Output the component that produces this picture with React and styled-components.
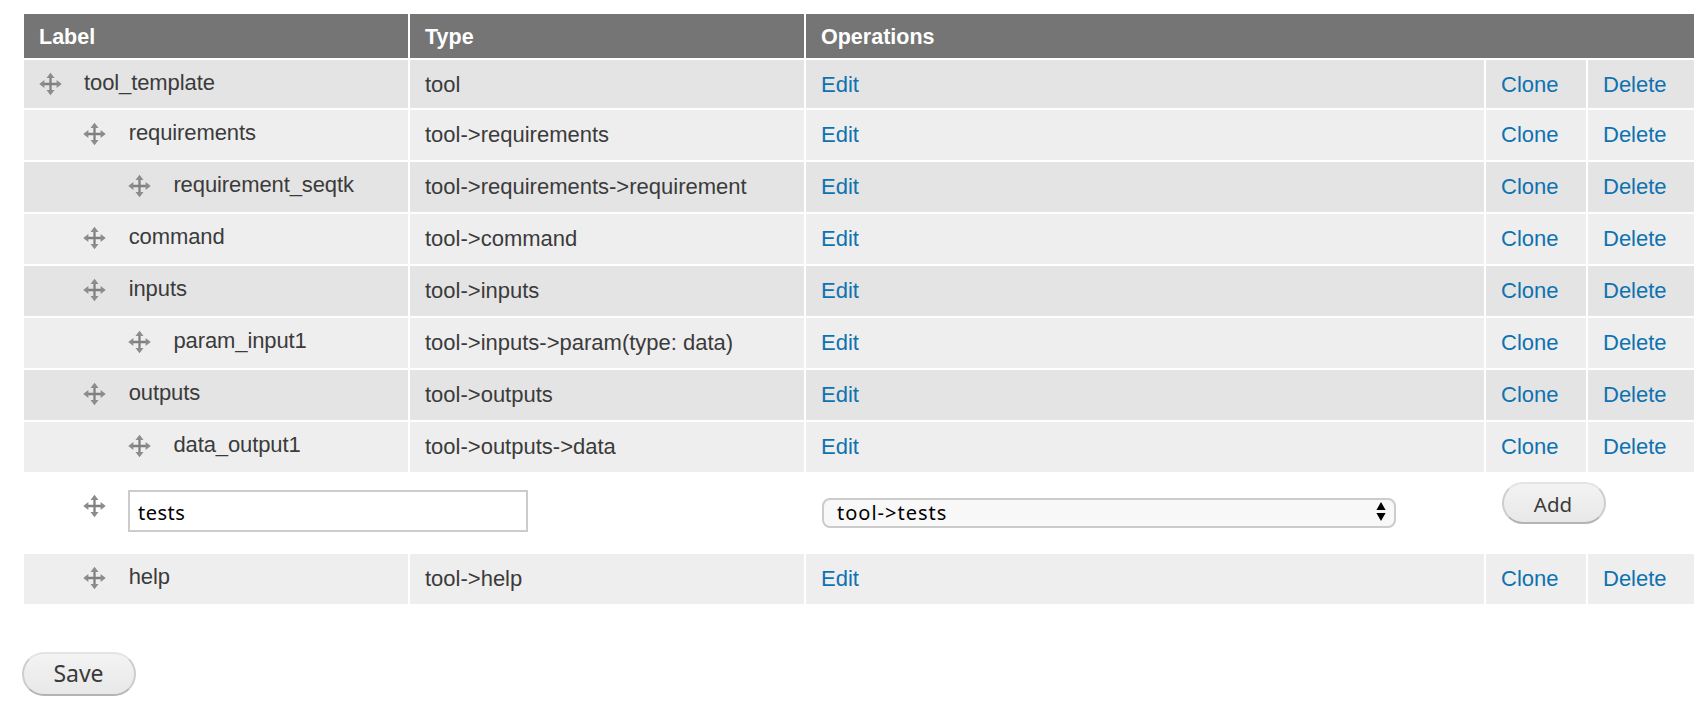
import React from 'react'
import styled, { createGlobalStyle } from 'styled-components'

const colors = {
  header: '#757575',
  odd: '#e4e4e4',
  even: '#eeeeee',
  text: '#3b3b3b',
  link: '#0f72b0',
  border: '#cccccc'
}

const rows = [
  { label: 'tool_template', type: 'tool', depth: 0, odd: true, first: true },
  { label: 'requirements', type: 'tool->requirements', depth: 1 },
  { label: 'requirement_seqtk', type: 'tool->requirements->requirement', depth: 2, odd: true },
  { label: 'command', type: 'tool->command', depth: 1 },
  { label: 'inputs', type: 'tool->inputs', depth: 1, odd: true },
  { label: 'param_input1', type: 'tool->inputs->param(type: data)', depth: 2 },
  { label: 'outputs', type: 'tool->outputs', depth: 1, odd: true },
  { label: 'data_output1', type: 'tool->outputs->data', depth: 2 }
]

const DragHandle = () => (
  <HandleIcon viewBox="0 0 24 24">
    <path d="M12 3V21M3 12H21" stroke="#808080" strokeWidth="2.4" />
    <path
      d="M12 .3L16.2 5.8H7.8ZM12 23.7L16.2 18.2H7.8ZM.3 12L5.6 7.8V16.2ZM23.7 12L18.4 7.8V16.2Z"
      fill="#8c8c8c"
    />
  </HandleIcon>
)

const ComponentRow = ({ label, type, depth, odd, first }) => (
  <Row $odd={odd} $first={first}>
    <Cell>
      <Tree $depth={depth}>
        <DragHandle />
        <Label>{label}</Label>
      </Tree>
    </Cell>
    <Cell>{type}</Cell>
    <Cell>
      <Link href="#">Edit</Link>
    </Cell>
    <Cell>
      <Link href="#">Clone</Link>
    </Cell>
    <Cell>
      <Link href="#">Delete</Link>
    </Cell>
  </Row>
)

const App = () => (
  <Page>
    <GlobalStyle />
    <Table>
      <HeaderRow>
        <HeaderCell>Label</HeaderCell>
        <HeaderCell>Type</HeaderCell>
        <HeaderCell $wide>Operations</HeaderCell>
      </HeaderRow>
      {rows.map(row => <ComponentRow key={row.label} {...row} />)}
      <FormRow>
        <NewItem>
          <DragHandle />
          <Input type="text" defaultValue="tests" />
        </NewItem>
        <Select type="button">
          tool-&gt;tests
          <SelectArrows viewBox="0 0 10 20">
            <path d="M5 0L9.6 8H.4ZM5 19L.4 11H9.6Z" />
          </SelectArrows>
        </Select>
        <AddButton>Add</AddButton>
      </FormRow>
      <ComponentRow label="help" type="tool->help" depth={1} />
    </Table>
    <SaveButton>Save</SaveButton>
  </Page>
)

export default App

const GlobalStyle = createGlobalStyle`
  body {
    margin: 0;
    background: #fff;
    overflow: hidden;
  }

  * {
    box-sizing: border-box;
  }
`

const Page = styled.div`
  padding: 14px 14px 0 24px;
  color: ${colors.text};
  font: 22px/26px 'Liberation Sans', Arial, sans-serif;
`

const Table = styled.div`
  display: flex;
  flex-direction: column;
`

const Row = styled.div`
  display: grid;
  grid-template-columns: 384px 394px 678px 100px 106px;
  column-gap: 2px;
  height: ${props => (props.$first ? '48px' : '50px')};
  margin-bottom: 2px;

  > div {
    background: ${props => (props.$odd ? colors.odd : colors.even)};
    padding-top: 12px;
  }
`

const Cell = styled.div`
  padding-left: 15px;
  white-space: nowrap;
`

const Tree = styled.div`
  display: flex;
  padding-left: ${props => props.$depth * 44.7}px;
`

const Label = styled.span`
  margin: -2px 0 0 22.5px;
  letter-spacing: -0.1px;
`

const HandleIcon = styled.svg`
  flex: none;
  width: 23px;
  height: 24px;
  margin-left: -0.5px;
`

const HeaderRow = styled(Row)`
  height: 44px;

  > div {
    background: ${colors.header};
    padding-top: 10px;
  }
`

const HeaderCell = styled.div`
  grid-column: ${props => (props.$wide ? 'span 3' : 'auto')};
  padding-left: 15px;
  color: #fff;
  font-size: 21.5px;
  font-weight: bold;
`

const Link = styled.a`
  color: ${colors.link};
  text-decoration: none;
`

const FormRow = styled.div`
  display: flex;
  align-items: flex-start;
  height: 80px;
`

const NewItem = styled.div`
  display: flex;
  padding: 16px 0 0 59.5px;

  ${HandleIcon} {
    margin-top: 4px;
  }
`

const Input = styled.input`
  width: 400px;
  height: 42px;
  margin-left: 22px;
  padding: 3px 8px 0;
  border: 2px solid ${colors.border};
  background: #fff;
  color: #000;
  font: 20px 'Noto Sans', sans-serif;
  letter-spacing: 0.5px;
`

const Select = styled.button`
  display: flex;
  align-items: center;
  justify-content: space-between;
  width: 574px;
  height: 30px;
  margin: 24px 0 0 294px;
  padding: 0 8px 1px 13px;
  border: 2px solid ${colors.border};
  border-radius: 8px;
  background: #f8f8f8;
  color: #000;
  font: 20px 'Noto Sans', sans-serif;
  letter-spacing: 1px;
`

const SelectArrows = styled.svg`
  width: 10px;
  height: 20px;
  margin-bottom: 2px;
`

const Button = styled.button`
  padding: 0;
  border: 2px solid #cdcdcd;
  border-top-color: #e4e4e4;
  border-bottom-color: #b4b4b4;
  border-radius: 22px;
  background: linear-gradient(#f3f3f3, #e8e8e8);
  color: #3a3a3a;
  font-family: 'Noto Sans', sans-serif;
`

const AddButton = styled(Button)`
  width: 104px;
  height: 42px;
  margin: 8px 0 0 106px;
  padding: 2px 2px 0 0;
  font-size: 20.5px;
`

const SaveButton = styled(Button)`
  width: 114px;
  height: 44px;
  margin: 46px 0 0 -2px;
  padding: 0 1px 2px 0;
  font-size: 23px;
`
